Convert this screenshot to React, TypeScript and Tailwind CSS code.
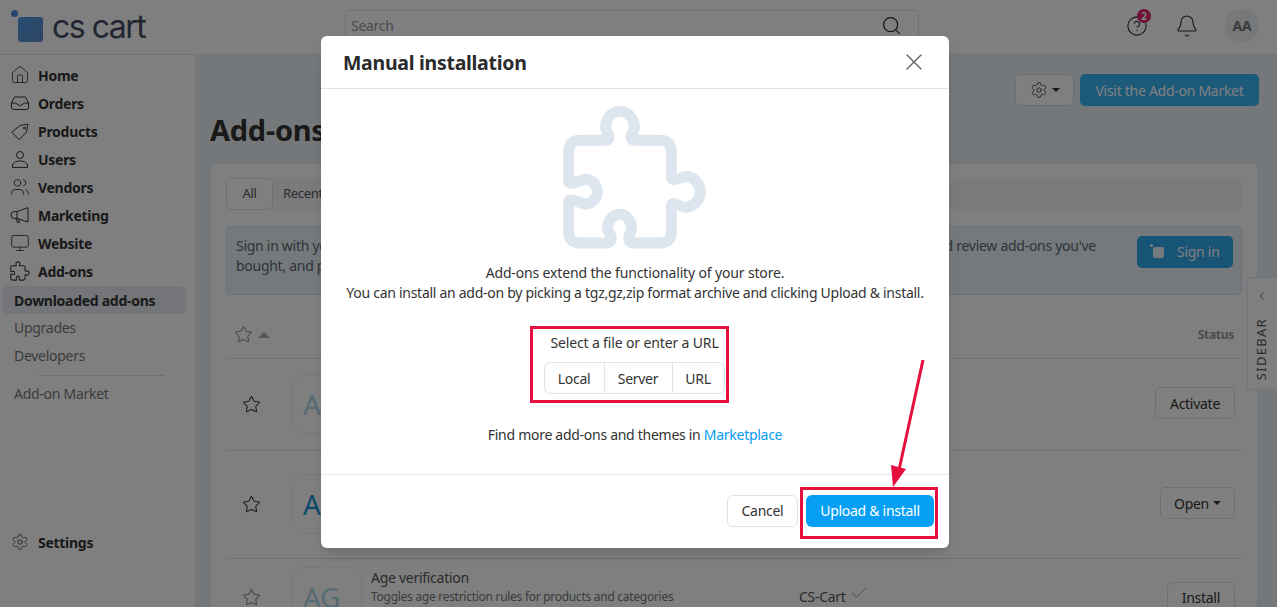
import { House, Users, Settings, Star, Search, Bell, CircleHelp, X, ChevronLeft, Check, Monitor } from "lucide-react";

const F = "font-['Noto_Sans',sans-serif] tracking-[-0.28px]";
const PUZZLE = "M146 185Q146 151 180 151L258 151C270 151 268 135 262 128C245 95 275 64 299 64C325 64 355 95 338 128C332 135 328 151 345 151L420 151Q454 151 454 185L454 260C454 278 475 265 495 260C520 258 541 280 541 305C541 330 520 352 495 352C475 348 454 330 454 350L454 425Q454 459 420 459L340 459C322 459 325 440 330 430C345 400 320 373 299 373C278 373 252 400 268 430C275 440 278 459 260 459L180 459Q146 459 146 425L146 340C146 320 165 335 195 342C215 342 232 325 232 305C232 285 215 268 195 268C165 275 146 290 146 270Z";

function Ico({ children }: { children: React.ReactNode }) {
  return (
    <svg width="20" height="20" viewBox="0 0 20 20" fill="none" stroke="currentColor" strokeWidth="1" strokeLinejoin="round" strokeLinecap="round">
      {children}
    </svg>
  );
}

const nav = [
  { label: "Home", icon: <House size={20} strokeWidth={1} /> },
  {
    label: "Orders",
    icon: (
      <Ico>
        <path d="M1.500 10 4.500 4h11l3 6v4.500a2 2 0 0 1-2 2h-13a2 2 0 0 1-2-2z" />
        <path d="M1.500 10h4l4.500 3 4.500-3h4" />
      </Ico>
    ),
  },
  {
    label: "Products",
    icon: (
      <Ico>
        <path d="M2 11 10 4.500 18 3 16.500 11 9.500 18.500Z" />
        <circle cx="14.500" cy="7" r="1" />
      </Ico>
    ),
  },
  {
    label: "Users",
    icon: (
      <Ico>
        <circle cx="10" cy="6" r="3.500" />
        <path d="M2.500 18v-1c0-3 3-5 7.500-5s7.500 2 7.500 5v1z" />
      </Ico>
    ),
  },
  { label: "Vendors", icon: <Users size={20} strokeWidth={1} /> },
  {
    label: "Marketing",
    icon: (
      <Ico>
        <path d="M18 3v14L7 13.500H4.500a3.500 3.500 0 0 1 0-7H7z" />
        <path d="M7 6.500v7M6 13.500l1.500 4h2L8.500 14" />
      </Ico>
    ),
  },
  { label: "Website", icon: <Monitor size={20} strokeWidth={1} /> },
  {
    label: "Add-ons",
    icon: (
      <svg width="20" height="20" viewBox="130 48 430 430" fill="none" stroke="currentColor" strokeWidth="22" strokeLinejoin="round">
        <path d={PUZZLE} />
      </svg>
    ),
  },
];

function Sidebar() {
  return (
    <aside className="w-[195px] shrink-0 bg-white flex flex-col pt-[6px] pl-[2px] pr-[9px] pb-[51px] text-[#333]">
      {nav.map((n) => (
        <div key={n.label} className="h-[28px] flex items-center gap-[8px] pl-[8px] text-[14px] font-bold">
          <span className="w-[20px] flex justify-center">{n.icon}</span>
          {n.label}
        </div>
      ))}
      <div className="h-[28px] mt-[1px] flex items-center pl-[12px] bg-[#e6ebf2] rounded-[6px] text-[14px] font-bold">Downloaded add-ons</div>
      <div className="h-[28px] -mt-[1px] flex items-center pl-[12px] text-[14px] text-[#777]">Upgrades</div>
      <div className="h-[28px] flex items-center pl-[12px] text-[14px] text-[#777]">Developers</div>
      <div className="ml-[37px] mr-[22px] mt-[6px] border-t border-[#d9dee6]" />
      <div className="h-[28px] mt-[3px] flex items-center pl-[12px] text-[14px] text-[#777]">Add-on Market</div>
      <div className="mt-auto h-[28px] flex items-center gap-[8px] pl-[8px] text-[14px] font-bold">
        <span className="w-[20px] flex justify-center"><Settings size={18} strokeWidth={1} /></span>
        Settings
      </div>
    </aside>
  );
}

function Logo() {
  return (
    <div className="relative w-[195px] h-[54px] pl-[18px] flex items-center gap-[9px]">
      <span className="absolute left-[11px] top-[10px] w-[7px] h-[7px] rounded-full bg-[#4a8fe0]" />
      <span className="w-[25px] h-[25px] mt-[5px] rounded-[3px] bg-gradient-to-br from-[#4a9fe0] to-[#5f86cf]" />
      <span className="text-[32px] leading-none text-[#444c63] font-['Inter',sans-serif] tracking-[-1.5px] -mt-[1px]">cs cart</span>
    </div>
  );
}

function Header() {
  return (
    <header className="h-[55px] shrink-0 bg-white border-b border-[#e2e6ec] flex items-center">
      <Logo />
      <div className="ml-[150px] w-[574px] h-[30px] -mt-[4px] border border-[#dde2e9] rounded-[5px] flex items-center justify-between pl-[5px] pr-[16px] text-[14px] text-[#999]">
        <span>Search</span>
        <Search size={21} strokeWidth={1.3} className="text-[#222]" />
      </div>
      <div className="ml-auto pr-[18px] -mt-[3px] flex items-center text-[#333]">
        <span className="relative">
          <CircleHelp size={22} strokeWidth={1.2} />
          <span className="absolute -right-[3px] -top-[6px] w-[14px] h-[14px] rounded-full bg-[#e0206c] text-white text-[10px] font-bold flex items-center justify-center leading-none">2</span>
        </span>
        <Bell size={24} strokeWidth={1.1} className="ml-[27px]" />
        <span className="ml-[26px] w-[34px] h-[34px] rounded-full bg-[#eef1f5] flex items-center justify-center text-[14px] font-bold text-[#777]">AA</span>
      </div>
    </header>
  );
}

function LogoTile({ text, dim }: { text: string; dim?: boolean }) {
  return (
    <div className={"w-[70px] h-[60px] border border-[#eef1f5] rounded-[12px] bg-white flex items-center pl-[10px] text-[28px] shrink-0 " + (dim ? "text-[#aed6ee]" : "text-[#1b93d6]")}>{text}</div>
  );
}

function Row({ h, pt, text, dim, action, caret, third }: { h: number; pt: number; text: string; dim?: boolean; action: string; caret?: boolean; third?: boolean }) {
  return (
    <div style={{ height: h, paddingTop: pt }} className="border-b border-[#dfe3ec] flex items-start pl-[16px] pr-[7px] last:border-0">
      <span className="w-[50px] h-[60px] flex items-center"><Star size={19} strokeWidth={1.3} className={dim && third ? "text-[#888]" : "text-[#333]"} /></span>
      <LogoTile text={text} dim={dim} />
      {third && (
        <div className="ml-[9px] pt-[1px] w-[428px] shrink-0">
          <div className="text-[14px] text-[#555] leading-[20px]">Age verification</div>
          <div className="text-[12px] text-[#777] leading-[18px]">Toggles age restriction rules for products and categories</div>
        </div>
      )}
      {third && (
        <div className="pt-[19px] text-[14px] text-[#555] flex items-center gap-[3px]">CS-Cart <Check size={20} strokeWidth={1} className="text-[#888] -mt-[8px]" /></div>
      )}
      <div className="ml-auto h-[60px] flex items-center">
        <span className={"h-[32px] border border-[#dde1e8] rounded-[5px] text-[14px] text-[#333] flex items-center gap-[4px] " + (caret ? "px-[13px] " : "px-[14px] ") + (third ? "mt-[1px]" : "-mt-[2px]")}>
          {action}
          {caret && <span className="border-x-[4px] border-x-transparent border-t-[4px] border-t-[#333]" />}
        </span>
      </div>
    </div>
  );
}

function Main() {
  return (
    <main className="flex-1 min-w-0 bg-[#ebf0f6] pl-[15px] pr-[19px] relative">
      <div className="h-[108px] pt-[19px] flex flex-col">
        <div className="flex justify-end gap-[6px] -mr-[1px]">
          <span className="w-[59px] h-[32px] border border-[#dde1e8] bg-white rounded-[5px] flex items-center justify-center gap-[4px] text-[#333]">
            <Settings size={18} strokeWidth={1.1} />
            <span className="border-x-[4px] border-x-transparent border-t-[4px] border-t-[#333]" />
          </span>
          <span className="h-[32px] w-[179px] rounded-[5px] bg-[#38b4f5] text-white text-[14px] flex items-center justify-center">Visit the Add-on Market</span>
        </div>
        <h1 className="text-[29px] font-bold text-[#333] leading-none mt-[9px]">Add-ons</h1>
      </div>
      <section className="bg-white border border-[#e2e8f0] rounded-[6px] h-[600px] px-[15px] pt-[14px] relative">
        <div className="h-[32px] bg-[#f5f7fa] rounded-[6px] flex items-center text-[13px] text-[#555]">
          <span className="h-[32px] w-[47px] bg-white border border-[#dde1e8] rounded-[5px] flex items-center justify-center">All</span>
          <span className="ml-[10px]">Recently</span>
        </div>
        <div className="mt-[16px] h-[69px] bg-[#e8f3fb] border border-[#d5e5f2] rounded-[4px] pl-[9px] pr-[10px] pt-[9px] relative text-[14px] text-[#666] leading-[20px]">
          <div className="flex justify-between pr-[135px]"><span>Sign in with your account</span><span>d review add-ons you've</span></div>
          <div>bought, and post</div>
          <span className="absolute right-[8px] top-[9px] w-[96px] h-[32px] rounded-[5px] bg-[#2ea8ea] text-white flex items-center pl-[16px] gap-[13px]">
            <span className="relative w-[11px] h-[11px] bg-white/90 rounded-[2px]"><span className="absolute -left-[3px] -top-[3px] w-[3px] h-[3px] rounded-full bg-white" /></span>
            Sign in
          </span>
        </div>
        <div className="h-[64px] border-b border-[#dfe3ec] flex items-end justify-between pb-[14px] pl-[8px] pr-[8px]">
          <span className="flex items-center gap-[5px] text-[#777]">
            <Star size={19} strokeWidth={1.2} />
            <span className="border-x-[6px] border-x-transparent border-b-[6px] border-b-[#aaa]" />
          </span>
          <span className="text-[12px] font-bold text-[#999]">Status</span>
        </div>
        <Row h={92} pt={15} text="A" dim action="Activate" />
        <Row h={108} pt={23} text="A" action="Open" caret />
        <Row h={80} pt={8} text="AG" dim third action="Install" />
      </section>
      <div className="absolute right-0 top-[222px] w-[30px] h-[113px] bg-white border border-[#e2e8f0] border-r-0 rounded-l-[3px] flex flex-col items-center pt-[11px] pr-[1px] text-[#555]">
        <ChevronLeft size={14} strokeWidth={1.5} />
        <span className="mt-[15px] text-[13px] tracking-[1.300px] [writing-mode:vertical-rl] rotate-180">SIDEBAR</span>
      </div>
    </main>
  );
}

function PuzzleArt() {
  return (
    <svg width="240" height="170" viewBox="0 0 720 510" fill="none" stroke="#dde5ee" strokeWidth="33" strokeLinejoin="round" strokeLinecap="round">
      <path d={PUZZLE} />
    </svg>
  );
}

function Modal() {
  return (
    <div className="ml-[321px] mt-[36px] w-[628px] h-[512px] bg-white rounded-[6px] flex flex-col text-[#333] shadow-lg relative">
      <div className="h-[53px] shrink-0 border-b border-[#dde5ee] flex items-center justify-between pl-[22px] pr-[21px]">
        <h2 className="text-[19.500px] font-bold text-[#2b2b2b] pt-[1px]">Manual installation</h2>
        <X size={28} strokeWidth={1.2} className="text-[#666]" />
      </div>
      <div className="flex-1 min-h-0 flex flex-col items-center text-[14px]">
        <div className="h-[170px] mt-[1px] ml-[10px] shrink-0"><PuzzleArt /></div>
        <p className="text-center leading-[20px] mt-[3px]"><span className="tracking-[-0.150px]">Add-ons extend the functionality of your store.</span><br />You can install an add-on by picking a tgz,gz,zip format archive and clicking Upload &amp; install.</p>
        <div className="mt-[30px] leading-[20px] tracking-[-0.140px] -ml-[1px]">Select a file or enter a URL</div>
        <div className="mt-[9px] h-[32px] w-[181px] flex border border-[#dde5ee] rounded-[6px] -ml-[2px]">
          <span className="w-[60px] flex items-center justify-center border-r border-[#dde5ee]">Local</span>
          <span className="w-[68px] flex items-center justify-center border-r border-[#dde5ee]">Server</span>
          <span className="flex-1 flex items-center justify-center">URL</span>
        </div>
        <p className="mt-[31px] leading-[20px]">Find more add-ons and themes in <span className="text-[#069cf0]">Marketplace</span></p>
      </div>
      <div className="h-[74px] shrink-0 border-t border-[#e6ebf1] flex items-center justify-end gap-[8px] pr-[15px] pb-[2px]">
        <span className="h-[32px] w-[71px] border border-[#dde5ee] rounded-[6px] flex items-center justify-center text-[14px]">Cancel</span>
        <span className="h-[32px] w-[128px] bg-[#069ff5] rounded-[6px] text-white flex items-center justify-center text-[14px]">Upload &amp; install</span>
      </div>
    </div>
  );
}

function Annotations() {
  return (
    <>
      <div className="absolute left-[530px] top-[326px] w-[199px] h-[77px] border-[3px] border-[#e6103e]" />
      <div className="absolute left-[800px] top-[487px] w-[138px] h-[52px] border-[3px] border-[#e6103e]" />
      <svg className="absolute left-[880px] top-[350px]" width="60" height="145" viewBox="880 350 60 145" fill="none">
        <path d="M923 360 899 470" stroke="#e6103e" strokeWidth="3" />
        <path d="M891 465 906 469 893 487Z" fill="#e6103e" />
      </svg>
    </>
  );
}

export default function App() {
  return (
    <div className={"relative w-[1277px] h-[607px] overflow-hidden flex flex-col " + F}>
      <Header />
      <div className="flex-1 min-h-0 flex">
        <Sidebar />
        <Main />
      </div>
      <div className="absolute inset-0 bg-black/50">
        <Modal />
      </div>
      <Annotations />
    </div>
  );
}
